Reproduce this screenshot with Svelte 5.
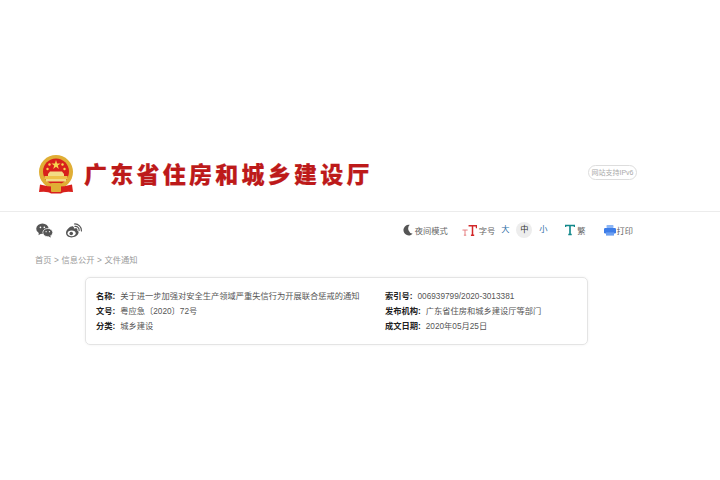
<script>
  const left = [
    ['名称:', '关于进一步加强对安全生产领域严重失信行为开展联合惩戒的通知'],
    ['文号:', '粤应急〔2020〕72号'],
    ['分类:', '城乡建设']
  ];
  const right = [
    ['索引号:', '006939799/2020-3013381'],
    ['发布机构:', '广东省住房和城乡建设厅等部门'],
    ['成文日期:', '2020年05月25日']
  ];
</script>

<div class="page">
  <header class="head">
    <div class="brand">
      <svg class="emblem" viewBox="0 0 38 40" width="38" height="40">
        <circle cx="19" cy="17" r="17" fill="#e0ae35"/>
        <circle cx="19" cy="16.5" r="13" fill="#d8201c"/>
        <polygon points="19,5 20.1,8.4 23.6,8.4 20.8,10.5 21.8,13.9 19,11.8 16.2,13.9 17.2,10.5 14.4,8.4 17.9,8.4" fill="#f6d64e"/>
        <circle cx="12.5" cy="9.5" r="1.2" fill="#f6d64e"/>
        <circle cx="25.5" cy="9.5" r="1.2" fill="#f6d64e"/>
        <circle cx="10.5" cy="14" r="1.2" fill="#f6d64e"/>
        <circle cx="27.5" cy="14" r="1.2" fill="#f6d64e"/>
        <path d="M11 19 L13 16.5 H25 L27 19 V21 H11 Z" fill="#f3dc85"/>
        <rect x="7.5" y="21" width="23" height="3" fill="#eec24a"/>
        <rect x="9" y="24" width="20" height="2.5" fill="#f3dc85"/>
        <path d="M3 29.5 Q19 34 35 29.5 L36 37 Q27 36 24 38.5 H14 Q11 36 2 37 Z" fill="#d8201c"/>
        <rect x="14" y="28" width="10" height="9" rx="1" fill="#e0ae35"/>
      </svg>
      <h1>广东省住房和城乡建设厅</h1>
    </div>
    <span class="ipv6">网站支持IPv6</span>
  </header>

  <div class="toolbar">
    <div class="social">
      <svg viewBox="0 0 18 16" width="17" height="15">
        <ellipse cx="6.8" cy="6" rx="6.6" ry="5.6" fill="#555"/>
        <path d="M3 10 L2.6 13 L6 11Z" fill="#555"/>
        <ellipse cx="12.5" cy="10.2" rx="5.3" ry="4.4" fill="#555" stroke="#fff" stroke-width=".8"/>
        <path d="M15 13.5 L16 15.5 L13 14.5Z" fill="#555"/>
        <circle cx="4.7" cy="4.6" r=".9" fill="#fff"/>
        <circle cx="8.8" cy="4.6" r=".9" fill="#fff"/>
        <circle cx="10.7" cy="9.2" r=".7" fill="#fff"/>
        <circle cx="14.3" cy="9.2" r=".7" fill="#fff"/>
      </svg>
      <svg viewBox="0 0 18 16" width="17" height="15">
        <path d="M1 10.5 C1 7 6 2.8 8.5 3.6 C10 4.2 9.4 6 9.4 6 C11.5 5.2 13.2 5.6 13.2 7 C13.2 7.6 13 8 13 8 C14.2 8.4 14.6 9.4 14.4 10.4 C13.8 13.4 10 15.4 6.8 15.4 C3.6 15.4 1 13.6 1 10.5Z" fill="#555"/>
        <ellipse cx="7" cy="11" rx="4.3" ry="3" fill="#fff"/>
        <circle cx="6.6" cy="11.2" r="1.9" fill="#555"/>
        <path d="M10.5 3.6 A4 4 0 0 1 15 8" fill="none" stroke="#555" stroke-width="1.2" stroke-linecap="round"/>
        <path d="M10 1 A7 7 0 0 1 17.4 8.6" fill="none" stroke="#555" stroke-width="1.2" stroke-linecap="round"/>
      </svg>
    </div>
    <div class="tools">
      <span class="tool night">
        <svg viewBox="0 0 12 13" width="10" height="12"><path d="M8 .3 A6.4 6.4 0 1 0 11.6 11 A6.4 6.4 0 0 1 8 .3Z" fill="#555"/></svg>
        夜间模式
      </span>
      <span class="tool size">
        <svg viewBox="0 0 16 13" width="15" height="13">
          <path d="M7 1.5 H15.5 V4 M11.2 1.5 V11.5 M9.5 11.5 H13" fill="none" stroke="#d2282a" stroke-width="1.6"/>
          <path d="M.5 6 H6 M3.2 6 V11.5 M2 11.5 H4.5" fill="none" stroke="#e4787a" stroke-width="1"/>
        </svg>
        字号
      </span>
      <span class="sizes">
        <span class="lvl">大</span>
        <span class="lvl on">中</span>
        <span class="lvl">小</span>
      </span>
      <span class="tool trad">
        <svg viewBox="0 0 11 12" width="10" height="12"><path d="M.5 2.8 V1 H10.5 V2.8 M5.5 1 V11 M3.6 11 H7.4" fill="none" stroke="#11888a" stroke-width="1.8"/></svg>
        繁
      </span>
      <span class="tool print">
        <svg viewBox="0 0 12 11" width="12" height="11">
          <rect x="2.5" y="0" width="7" height="3" rx=".8" fill="#8db6f5"/>
          <rect x="0" y="3" width="12" height="5.4" rx="1.2" fill="#3d7de8"/>
          <rect x="2" y="7.4" width="8" height="3.2" fill="#6c9ff0"/>
        </svg>
        打印
      </span>
    </div>
  </div>

  <nav class="crumbs">首页<i>&gt;</i>信息公开<i>&gt;</i>文件通知</nav>

  <section class="card">
    <div class="col c1">
      {#each left as [k, v]}
        <p><b>{k}</b>{v}</p>
      {/each}
    </div>
    <div class="col">
      {#each right as [k, v]}
        <p><b>{k}</b>{v}</p>
      {/each}
    </div>
  </section>
</div>

<style>
  :global(body) {
    margin: 0;
    background: #fff;
  }
  .page {
    width: 720px;
    height: 480px;
    overflow: hidden;
    font-family: "Liberation Sans", "Noto Sans CJK SC", sans-serif;
    color: #555;
  }
  .head {
    box-sizing: border-box;
    height: 212px;
    padding: 155px 83px 0 37px;
    border-bottom: 1px solid #ececec;
    display: flex;
    justify-content: space-between;
    align-items: flex-start;
  }
  .brand {
    display: flex;
    align-items: flex-start;
    gap: 9px;
  }
  .emblem {
    display: block;
  }
  h1 {
    margin: 0;
    padding-top: 3px;
    font: 900 23px/30px "Noto Sans CJK SC", sans-serif;
    letter-spacing: 3.25px;
    color: #bd1a1a;
    -webkit-text-stroke: .2px #bd1a1a;
    white-space: nowrap;
  }
  .ipv6 {
    margin-top: 10px;
    box-sizing: border-box;
    height: 15px;
    width: 49px;
    text-align: center;
    border: 1px solid #ddd;
    border-radius: 8px;
    font-size: 7px;
    line-height: 13px;
    color: #aaa;
    white-space: nowrap;
  }
  .toolbar {
    height: 36px;
    padding: 0 87px 0 36px;
    display: flex;
    justify-content: space-between;
    align-items: center;
  }
  .social {
    display: flex;
    gap: 12px;
    align-items: center;
  }
  .social svg {
    display: block;
  }
  .tools {
    display: flex;
    align-items: center;
    font-size: 8.25px;
    color: #666;
  }
  .tool {
    display: flex;
    align-items: center;
    gap: 2px;
    white-space: nowrap;
  }
  .night { margin-right: 14px; }
  .size { gap: 2px; margin-right: 2px; }
  .sizes {
    display: flex;
    align-items: center;
    gap: 3px;
    margin-right: 14px;
    color: #2f6ea5;
  }
  .lvl {
    width: 16px;
    height: 16px;
    line-height: 16px;
    text-align: center;
    border-radius: 50%;
  }
  .lvl.on {
    background: #ededed;
    color: #333;
  }
  .trad { margin-right: 18px; }
  .print { gap: 1px; }
  .crumbs {
    padding: 5px 0 0 35px;
    height: 24px;
    font-size: 8.25px;
    line-height: 15px;
    color: #999;
  }
  .crumbs i {
    font-style: normal;
    display: inline-block;
    width: 10px;
    text-align: center;
  }
  .card {
    box-sizing: border-box;
    margin: 0 0 0 85px;
    width: 503px;
    height: 68px;
    padding: 11px 10px;
    border: 1px solid #e4e4e4;
    border-radius: 5px;
    box-shadow: 0 0 3px rgba(0, 0, 0, .06);
    display: flex;
    font-size: 8.25px;
    color: #555;
  }
  .col.c1 {
    width: 289px;
    flex: none;
  }
  .col p {
    margin: 0;
    line-height: 15px;
    white-space: nowrap;
  }
  .col b {
    font-weight: 700;
    color: #222;
    margin-right: 3px;
    display: inline-block;
    padding-right: 2px;
  }
</style>
